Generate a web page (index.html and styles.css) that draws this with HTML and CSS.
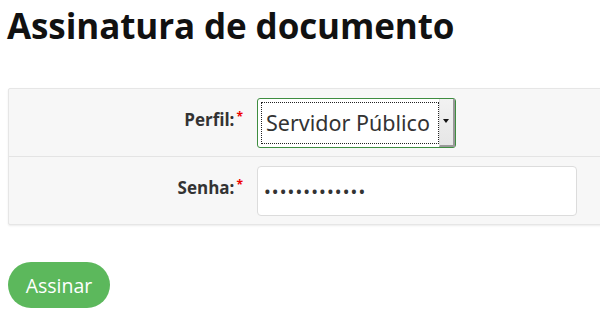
FILE: index.html
```html
<!DOCTYPE html>
<html lang="pt-BR">
<head>
    <meta charset="UTF-8">
    <title>Assinatura de documento</title>
    <link rel="stylesheet" href="styles.css">
</head>
<body>
    <h1>Assinatura de documento</h1>

    <form class="sign-form">
        <div class="fieldset">
            <div class="row">
                <label class="field-label" for="perfil">Perfil:<span class="req">*</span></label>
                <div class="select-box">
                    <select id="perfil">
                        <option>Servidor Público</option>
                    </select>
                    <span class="select-arrow"></span>
                </div>
            </div>
            <div class="row">
                <label class="field-label" for="senha">Senha:<span class="req">*</span></label>
                <input type="password" id="senha" class="text-input" value="1234567890123">
            </div>
        </div>

        <button type="button" class="btn-sign">Assinar</button>
    </form>
</body>
</html>
```

FILE: styles.css
```css
/* General */
body {
    margin: 0;
    padding: 0 8px;
    font-family: "Open Sans", "Noto Sans", sans-serif;
    color: #222;
    background: #fff;
    overflow: hidden;
}

h1 {
    font-size: 35px;
    font-weight: bold;
    color: #111;
    margin: 0 0 0 -1px;
    padding-top: 3px;
    height: 85px;
    line-height: 46px;
    letter-spacing: -0.1px;
}

/* Panel */
.fieldset {
    width: 620px;
    background-color: #f7f7f7;
    border: 1px solid #e6e6e6;
    border-radius: 2px;
    box-shadow: 0 1px 2px rgba(0, 0, 0, 0.08);
}

.row {
    display: flex;
    align-items: center;
    gap: 14px;
    height: 67px;
}

.row + .row {
    border-top: 1px solid #e4e4e4;
}

.field-label {
    width: 234px;
    text-align: right;
    font-size: 17px;
    font-weight: bold;
    color: #333;
    position: relative;
    top: -3px;
}

.req {
    color: #e00;
    font-size: 12px;
    margin-left: 2px;
    position: relative;
    top: -5px;
}

/* Select */
.select-box {
    display: flex;
    width: 197px;
    height: 48px;
    border: 1px solid #3e8d40;
    border-radius: 3px;
    background: #fff;
    box-sizing: content-box;
}

.select-box select {
    appearance: none;
    -webkit-appearance: none;
    flex: 1;
    min-width: 0;
    margin: 3px 0 3px 3px;
    padding: 0 0 0 4px;
    border: 1px dotted #222;
    background: #fff;
    font-family: "Noto Sans", "Open Sans", sans-serif;
    font-size: 21.5px;
    color: #333;
    outline: none;
}

.select-arrow {
    width: 13px;
    background: linear-gradient(#f2f2f2, #e6e6e6);
    border-left: 1px solid #ddd;
    border-right: 2px solid #999;
    border-bottom: 2px solid #999;
    position: relative;
}

.select-arrow::after {
    content: "";
    position: absolute;
    left: 3px;
    top: 20px;
    border-left: 3px solid transparent;
    border-right: 3px solid transparent;
    border-top: 4px solid #111;
}

/* Password */
.text-input {
    width: 320px;
    height: 50px;
    box-sizing: border-box;
    border: 1px solid #dcdcdc;
    border-radius: 4px;
    background: #fff;
    padding: 0 6px;
    font-size: 18px;
    letter-spacing: 1.1px;
    color: #333;
    font-family: "Noto Sans", sans-serif;
}

/* Button */
.btn-sign {
    margin-top: 37px;
    width: 102px;
    height: 46px;
    border: none;
    border-radius: 23px;
    background-color: #5cb85c;
    color: #fff;
    font-family: "Open Sans", sans-serif;
    font-size: 19.5px;
    cursor: pointer;
}
```
